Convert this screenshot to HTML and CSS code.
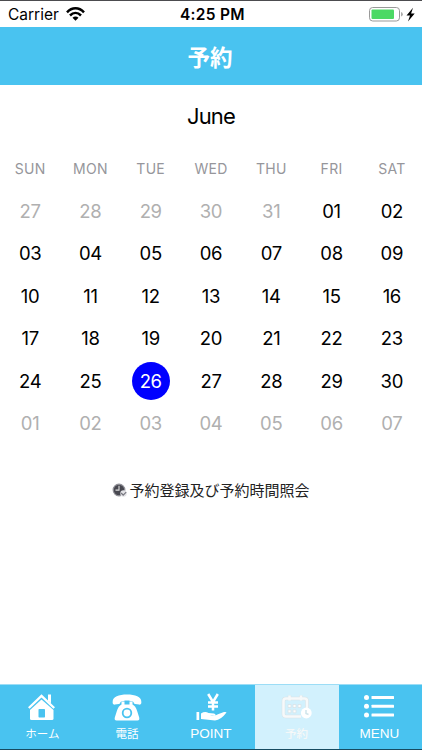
FILE: index.html
```html
<!DOCTYPE html>
<html lang="ja">
<head>
<meta charset="utf-8">
<title>予約</title>
<link rel="stylesheet" href="styles.css">
</head>
<body>
<div class="app">
  <div class="status">
    <div class="status-left"><span class="carrier">Carrier</span>
      <svg class="wifi" width="19" height="14" viewBox="0 0 19 14"><g fill="none" stroke="#000" stroke-width="2.5"><path d="M1 5.300C6-.1 13-.1 18 5.300"/><path d="M4 8.500c3.300-3.300 7.700-3.300 11 0"/></g><path d="M6.500 10.800c1.800-1.600 4.200-1.600 6 0L9.500 13.700z"/></svg>
    </div>
    <div class="time">4:25 PM</div>
    <div class="status-right">
      <svg width="48" height="16" viewBox="0 0 48 16"><rect x=".5" y=".5" width="30" height="13.500" rx="3.200" fill="#fff" stroke="#999"/><rect x="2.500" y="2.500" width="22.500" height="9.500" rx="1" fill="#4cd964"/><path d="M32.200 5v4.500q1.500-.5 1.500-2.250T32.200 5z" fill="#999"/><path d="M44 .8l-6.500 7.600h3.500L39 14.600l6.700-8.100h-3.600z"/></svg>
    </div>
  </div>
  <header class="header">予約</header>
  <main class="main">
    <h1 class="month">June</h1>
    <div class="weekdays"><span>SUN</span><span>MON</span><span>TUE</span><span>WED</span><span>THU</span><span>FRI</span><span>SAT</span></div>
    <div class="days">
      <span class="out">27</span><span class="out">28</span><span class="out">29</span><span class="out">30</span><span class="out">31</span><span>01</span><span>02</span>
      <span>03</span><span>04</span><span>05</span><span>06</span><span>07</span><span>08</span><span>09</span>
      <span>10</span><span>11</span><span>12</span><span>13</span><span>14</span><span>15</span><span>16</span>
      <span>17</span><span>18</span><span>19</span><span>20</span><span>21</span><span>22</span><span>23</span>
      <span>24</span><span>25</span><span><b class="selected">26</b></span><span>27</span><span>28</span><span>29</span><span>30</span>
      <span class="out">01</span><span class="out">02</span><span class="out">03</span><span class="out">04</span><span class="out">05</span><span class="out">06</span><span class="out">07</span>
    </div>
    <div class="action">
      <svg width="15" height="14" viewBox="0 0 15 14"><circle cx="7" cy="7" r="5.800" fill="#484850" stroke="#909097" stroke-width="1.200"/><path d="M7 2.800v4.300H3.500" fill="none" stroke="#ddd" stroke-width="1.100"/><circle cx="11.500" cy="10.500" r="3.200" fill="#e2e2e6"/><path d="M9.200 10l2 2.200 3-3" fill="none" stroke="#77777f" stroke-width="1.200"/></svg>
      <span>予約登録及び予約時間照会</span>
    </div>
  </main>
  <nav class="tabs">
    <div class="tab"><svg width="30" height="30" viewBox="0 0 30 30"><path d="M21 3.500h3v9l-3-3z" fill="#fff"/><path d="M1.800 17L14.500 4.800 27.200 17" fill="none" stroke="#fff" stroke-width="2.300"/><path d="M14.500 8.500L26.500 19v8.500q0 1.500-1.500 1.500H4.500Q3 29 3 27.500V19z" fill="#fff"/><rect x="11.500" y="18" width="6.500" height="8.500" rx=".7" fill="#49c3f0"/></svg><span class="label ja">ホーム</span></div>
    <div class="tab"><svg width="30" height="30" viewBox="0 0 30 30"><path d="M.8 12.500C-.5 6 6 3.500 15 3.500s15.500 2.500 14.200 9q-.4 1.300-2 1.100l-4-.5q-1.600-.2-1.700-2.100C18 9 12 9 8.500 11q-.1 1.900-1.700 2.100l-4 .5q-1.600.2-2-1.100z" fill="#fff"/><path d="M9.500 10.500h3v3h5v-3h3v3q3 1.200 4.800 7l1.900 6q.7 3-1.700 3h-21q-2.400 0-1.700-3l1.900-6q1.800-5.800 4.800-7z" fill="#fff"/><circle cx="15" cy="22" r="4.300" fill="none" stroke="#49c3f0" stroke-width="1.800"/></svg><span class="label ja">電話</span></div>
    <div class="tab"><svg width="32" height="30" viewBox="0 0 32 30"><path d="M12.200 3l4.800 8 4.800-8M17 11v8.500M12 11.500h10M12 15.500h10" fill="none" stroke="#fff" stroke-width="2.500"/><path d="M.5 21h2.700v8H.5zM5 22.500q4-2.500 7.500-.5l5.500.4q2 .3 1.500 2H14q4 1.200 8-1.200l6-2.200q2.500-.4 2.500.6Q25 29 19 29.500L5 28z" fill="#fff"/></svg><span class="label point">POINT</span></div>
    <div class="tab active"><svg width="32" height="30" viewBox="0 0 32 30"><g stroke="#d9e3e7" stroke-width="3.600" fill="none"><path d="M20 25.500H5q-2.500 0-2.500-2.500v-13Q2.500 7.500 5 7.500h18.500Q26 7.500 26 10v7M8.500 4.500v5M20 4.500v5"/></g><g stroke="#f6f9fa" stroke-width="2.500" fill="none"><path d="M20 25.500H5q-2.500 0-2.500-2.500v-13Q2.500 7.500 5 7.500h18.500Q26 7.500 26 10v7M8.500 4.500v5M20 4.500v5"/></g><path d="M7 13.500h3v3H7zm5 0h3v3h-3zm5 0h3v3h-3zM7 18.800h3v3H7zm5 0h3v3h-3z" fill="#fbfcfc" stroke="#d9e3e7" stroke-width=".8"/><circle cx="25.300" cy="22" r="5.400" fill="#fff"/><path d="M25 19v3.500l2.500 1" fill="none" stroke="#cfe5eb" stroke-width="1.500"/></svg><span class="label ja">予約</span></div>
    <div class="tab"><svg width="32" height="30" viewBox="0 0 32 30"><g fill="#fff"><circle cx="2.500" cy="6.500" r="2.500"/><circle cx="2.500" cy="15.300" r="2.500"/><circle cx="2.500" cy="24" r="2.500"/><rect x="7.500" y="5" width="22.500" height="3" rx=".5"/><rect x="7.500" y="13.800" width="22.500" height="3" rx=".5"/><rect x="7.500" y="22.500" width="22.500" height="3" rx=".5"/></g></svg><span class="label">MENU</span></div>
  </nav>
</div>
</body>
</html>
```
FILE: styles.css
```css
* { box-sizing: border-box; }
body { margin: 0; background: #fff; color: #000; font-family: Inter, "Noto Sans CJK JP", sans-serif; }
.app { width: 422px; height: 750px; display: flex; flex-direction: column; overflow: hidden; border-top: 1px solid #4c4c4f; border-bottom: 1px solid #164b61; }
.status { height: 26px; display: grid; grid-template-columns: 1fr auto 1fr; align-items: center; padding: 1px 5px 0 8px; line-height: 20px; }
.status-left { display: flex; align-items: center; gap: 7px; font-size: 15.500px; }
.carrier { width: 51px; white-space: nowrap; }
.wifi { margin-top: -1px; }
.time { font-size: 15.500px; font-weight: 600; letter-spacing: .3px; }
.status-right { display: flex; justify-content: flex-end; }
.header { height: 58px; padding-right: 2px; background: #49c3f0; color: #fff; font: 700 22.500px/59px "Noto Sans CJK JP", sans-serif; text-align: center; }
.main { flex: 1; }
.month { margin: 17px 0 0; font-size: 22px; font-weight: 400; line-height: 28px; letter-spacing: -.8px; text-align: center; }
.weekdays { display: grid; grid-template-columns: repeat(7, 1fr); margin-top: 29px; height: 20px; line-height: 20px; font-size: 14px; letter-spacing: .3px; text-align: center; color: #96969b; }
.days { display: grid; grid-template-columns: repeat(7, 1fr); grid-auto-rows: 42.400px; margin-top: 10.800px; font-size: 18.500px; letter-spacing: -.3px; }
.days > span { display: flex; align-items: center; justify-content: center; }
.days .out { color: #b0b0b0; }
.selected { display: flex; align-items: center; justify-content: center; width: 38px; height: 38px; border-radius: 50%; background: #00f; color: #fff; font-weight: 400; }
.action { display: flex; justify-content: center; align-items: center; gap: 2px; height: 24px; margin-top: 34.200px; color: #222; font: 400 15px/24px "Noto Sans CJK JP", sans-serif; }
.tabs { height: 65px; display: grid; grid-template-columns: 84.700px 84.600px 85.300px 84px 1fr; background: #49c3f0; border-top: 1px solid #9cddf6; color: #fff; }
.tab { display: flex; flex-direction: column; align-items: center; padding-top: 6px; }
.active { background: #d2f1fd; color: #f8fafa; text-shadow: 0 0 1px #e2eef1; }
.label { height: 22px; margin: 2px 2px 0 0; font: 400 13.500px/22px "Liberation Sans", sans-serif; }
.label.ja { margin-top: 1px; margin-right: 0; font: 400 11.500px/22px "Noto Sans CJK JP", sans-serif; }
```
